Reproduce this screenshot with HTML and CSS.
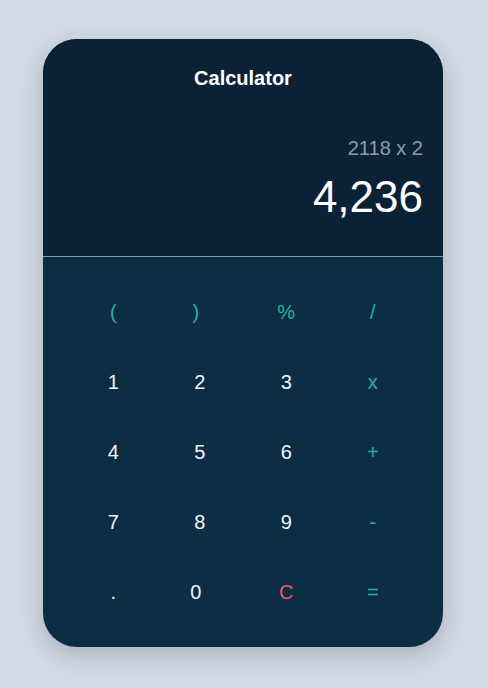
FILE: index.html
```html
<!DOCTYPE html>
<html lang="en">
<head>
<meta charset="utf-8">
<title>Calculator</title>
<link rel="stylesheet" href="styles.css">
</head>
<body>
<div class="calc">
  <div class="screen">
    <h1 class="title">Calculator</h1>
    <div class="expr">2118 x 2</div>
    <div class="result">4,236</div>
  </div>
  <div class="keys">
    <button class="key op">(</button>
    <button class="key op shift-l">)</button>
    <button class="key op">%</button>
    <button class="key op">/</button>
    <button class="key">1</button>
    <button class="key">2</button>
    <button class="key">3</button>
    <button class="key op">x</button>
    <button class="key">4</button>
    <button class="key">5</button>
    <button class="key">6</button>
    <button class="key op">+</button>
    <button class="key">7</button>
    <button class="key">8</button>
    <button class="key">9</button>
    <button class="key op">-</button>
    <button class="key">.</button>
    <button class="key shift-l">0</button>
    <button class="key clear">C</button>
    <button class="key op">=</button>
  </div>
</div>
</body>
</html>
```
FILE: styles.css
```css
html, body {
  margin: 0;
  padding: 0;
}
body {
  background: #d2dae4;
  font-family: "Liberation Sans", Arial, sans-serif;
  display: flex;
  justify-content: center;
  padding-top: 39px;
  padding-right: 2px;
  height: 688px;
  box-sizing: border-box;
}
.calc {
  width: 400px;
  height: 608px;
  border-radius: 34px;
  overflow: hidden;
  background: #0c2e45;
  box-shadow: 0 8px 24px rgba(20, 30, 50, 0.22);
  display: flex;
  flex-direction: column;
}
.screen {
  background: #0b2136;
  border-bottom: 1px solid #8a9bad;
  padding: 28px 20px 34px;
  display: flex;
  flex-direction: column;
  height: 218px;
  box-sizing: border-box;
}
.title {
  margin: 0;
  color: #ffffff;
  font-size: 20px;
  font-weight: bold;
  line-height: 23px;
  text-align: center;
}
.expr {
  margin-top: 47px;
  color: #8c9bb0;
  font-size: 20px;
  line-height: 23px;
  text-align: right;
}
.result {
  margin-top: 11px;
  color: #ffffff;
  font-size: 44px;
  line-height: 51px;
  text-align: right;
}
.keys {
  flex: 1;
  display: grid;
  grid-template-columns: repeat(4, 1fr);
  grid-auto-rows: 70px;
  padding: 20px 27px;
}
.key {
  background: none;
  border: none;
  padding: 0;
  margin: 0;
  font-family: "Liberation Sans", Arial, sans-serif;
  font-size: 20px;
  color: #f2f4f6;
  cursor: pointer;
}
.key.shift-l {
  padding-right: 8px;
}
.key.op {
  color: #2aaea3;
}
.key.clear {
  color: #ee5a60;
}
```
